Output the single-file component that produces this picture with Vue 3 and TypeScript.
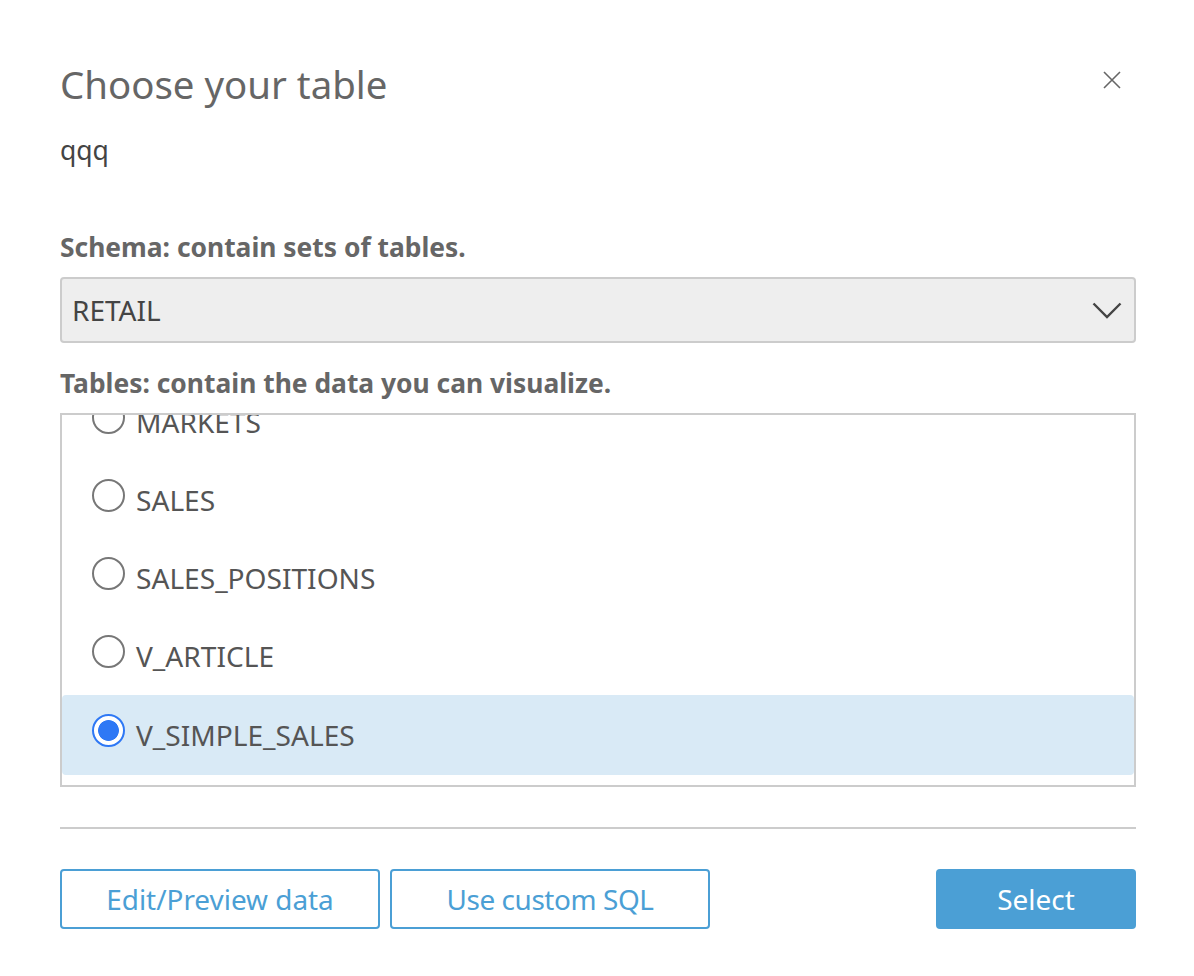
<script setup lang="ts">
import { ref } from 'vue';

// Tables in the scrolled list, last one sits at the bottom edge
const tables = ['MARKETS', 'SALES', 'SALES_POSITIONS', 'V_ARTICLE', 'V_SIMPLE_SALES'];
const selected = ref('V_SIMPLE_SALES');
</script>

<template>
  <div class="dialog">
    <header class="dialog-header">
      <h1 class="title">Choose your table</h1>
      <button class="close" type="button" aria-label="Close">
        <svg width="20" height="20" viewBox="0 0 20 20">
          <path d="M2 2 L18 18 M18 2 L2 18" fill="none" stroke="#666" stroke-width="1.6" />
        </svg>
      </button>
    </header>
    <p class="source">qqq</p>

    <label class="field-label schema-label">Schema: contain sets of tables.</label>
    <div class="select">
      <span>RETAIL</span>
      <svg width="30" height="17" viewBox="0 0 30 17">
        <path d="M1.5 1.5 L15 15 L28.5 1.5" fill="none" stroke="#444" stroke-width="2.4" />
      </svg>
    </div>

    <label class="field-label tables-label">Tables: contain the data you can visualize.</label>
    <div class="table-list">
      <div
        v-for="table in tables"
        :key="table"
        class="table-row"
        :class="{ active: selected === table }"
        @click="selected = table"
      >
        <span class="radio" :class="{ checked: selected === table }"></span>
        <span class="table-name">{{ table }}</span>
      </div>
    </div>

    <hr class="divider" />

    <footer class="actions">
      <button class="btn outline" type="button">Edit/Preview data</button>
      <button class="btn outline tight" type="button">Use custom SQL</button>
      <button class="btn primary" type="button">Select</button>
    </footer>
  </div>
</template>

<style>
html,
body {
  margin: 0;
  background: #fff;
}
</style>

<style scoped>
.dialog {
  box-sizing: border-box;
  width: 1194px;
  height: 976px;
  padding: 57px 58px 0 60px;
  font-family: "Noto Sans", "Open Sans", sans-serif;
  color: #555;
}

.dialog-header {
  display: flex;
  justify-content: space-between;
  align-items: flex-start;
}

.title {
  margin: 0;
  font-size: 38.4px;
  line-height: 54px;
  font-weight: 400;
  color: #666;
}

.close {
  border: 0;
  padding: 0;
  margin: 13px 14px 0 0;
  background: none;
  display: flex;
}

.source {
  margin: 21px 0 0;
  font-size: 26.5px;
  line-height: 36px;
  color: #444;
}

.field-label {
  display: block;
  font-size: 26.4px;
  line-height: 34px;
  font-weight: 700;
  color: #666;
}

.schema-label {
  margin-top: 62px;
}

.tables-label {
  margin-top: 23px;
}

.select {
  box-sizing: border-box;
  height: 66px;
  margin-top: 13px;
  padding: 0 12px 0 10px;
  display: flex;
  align-items: center;
  justify-content: space-between;
  background: #eee;
  border: 2px solid #ccc;
  border-radius: 4px;
  font-size: 28px;
  color: #444;
}

.table-list {
  box-sizing: border-box;
  height: 374px;
  margin-top: 13px;
  padding-bottom: 10px;
  display: flex;
  flex-direction: column;
  justify-content: flex-end;
  overflow: hidden;
  border: 2px solid #ccc;
}

.table-row {
  flex: none;
  box-sizing: border-box;
  height: 78px;
  padding-left: 30px;
  display: flex;
  align-items: center;
  gap: 11px;
  border-radius: 4px;
  font-size: 28.1px;
  color: #555;
}

.table-row.active {
  height: 80px;
  background: #d9eaf6;
}

.radio {
  flex: none;
  box-sizing: border-box;
  width: 33px;
  height: 33px;
  margin-top: -10px;
  border: 2px solid #777;
  border-radius: 50%;
  background: #fff;
}

.radio.checked {
  border-color: #2e78f5;
  background: radial-gradient(circle, #2e78f5 0 10px, #fff 10.8px);
}

.divider {
  height: 2px;
  margin: 40px 0;
  border: 0;
  background: #ccc;
}

.actions {
  display: flex;
  gap: 10px;
}

.btn {
  box-sizing: border-box;
  height: 60px;
  border-radius: 4px;
  font-family: inherit;
  font-size: 27.9px;
}

.outline {
  width: 320px;
  background: #fff;
  border: 2px solid #4b9fd5;
  color: #4b9fd5;
}

.tight {
  letter-spacing: -0.4px;
}

.primary {
  width: 200px;
  margin-left: auto;
  background: #4b9fd5;
  border: 0;
  color: #fff;
}
</style>
